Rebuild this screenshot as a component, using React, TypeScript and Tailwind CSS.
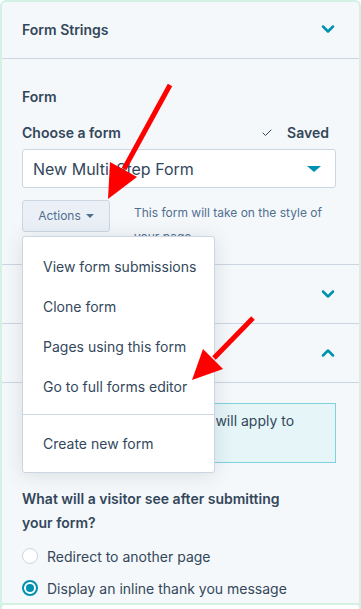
import { Check, ChevronDown, ChevronUp } from "lucide-react";

const menuItems = ["View form submissions", "Clone form", "Pages using this form", "Go to full forms editor"];

function SectionHeader({ title, open }: { title?: string; open?: boolean }) {
  return (
    <div className="flex h-[59px] items-center justify-between border-b border-[#cbd6e2] pl-[20px] pr-[21px]">
      <span className="text-[14px] font-semibold text-[#33475b]">{title}</span>
      {open ? (
        <ChevronUp className="h-[20px] w-[20px] text-[#0091ae]" strokeWidth={3} />
      ) : (
        <ChevronDown className="h-[20px] w-[20px] text-[#0091ae]" strokeWidth={3} />
      )}
    </div>
  );
}

function Radio({ label, checked }: { label: string; checked?: boolean }) {
  return (
    <label className="flex h-[32px] items-center gap-[9px]">
      <span
        className={
          checked
            ? "grid h-[16px] w-[16px] place-items-center rounded-full border-2 border-[#0091ae] bg-white"
            : "h-[16px] w-[16px] rounded-full border border-[#cbd6e2] bg-white"
        }
      >
        {checked && <span className="h-[8px] w-[8px] rounded-full bg-[#0091ae]" />}
      </span>
      <span className="text-[14px] text-[#33475b]">{label}</span>
    </label>
  );
}

export default function App() {
  return (
    <div className="relative h-[609px] w-[361px] overflow-hidden bg-white font-['Inter',sans-serif]">
      <div className="h-full rounded-t-[6px] border-2 border-b-0 border-[#d3f2e4] bg-[#f5f8fa]">
        <div className="-mt-[2px]">
          <SectionHeader title="Form Strings" />
        </div>

        <div className="border-b border-[#cbd6e2] pb-[15px] pl-[20px] pr-[23px] pt-[27px]">
          <p className="text-[14px] font-semibold leading-[22px] text-[#33475b]">Form</p>
          <div className="mt-[14px] flex items-center justify-between pr-[7px]">
            <span className="text-[14px] font-semibold leading-[20px] text-[#33475b]">Choose a form</span>
            <span className="flex items-center gap-[14px] text-[14px] font-semibold text-[#33475b]">
              <Check className="h-[12px] w-[12px]" strokeWidth={2} />
              Saved
            </span>
          </div>
          <div className="mt-[6px] flex h-[39px] items-center justify-between rounded-[3px] border border-[#cbd6e2] bg-white pl-[10px] pr-[14px]">
            <span className="text-[16px] text-[#33475b]">New Multi-Step Form</span>
            <span className="h-0 w-0 border-x-[7px] border-t-[6px] border-x-transparent border-t-[#0091ae]" />
          </div>
          <div className="mt-[12px] flex items-start gap-[24px]">
            <button className="flex h-[32px] w-[88px] shrink-0 items-center justify-center gap-[5px] rounded-[3px] border border-[#cbd6e2] bg-[#eaf0f6] text-[12px] text-[#506e91]">
              Actions
              <span className="h-0 w-0 border-x-[4px] border-t-[4px] border-x-transparent border-t-[#506e91]" />
            </button>
            <p className="pt-[1px] text-[12px] leading-[24px] text-[#516f90]">
              This form will take on the style of your page.
            </p>
          </div>
        </div>

        <SectionHeader />
        <SectionHeader open />

        <div className="pl-[20px] pr-[23px] pt-[20px]">
          <div className="flex h-[60px] flex-col justify-center border border-[#7fd1de] bg-[#e5f5f8] pl-[1px] pr-[14px] text-[14px] leading-[24px] text-[#33475b]">
            <p className="whitespace-nowrap">
              Any changes you make here will apply to
              <br />
              every page using this form.
            </p>
          </div>
          <p className="mt-[24px] w-[280px] text-[14px] font-semibold leading-[24px] text-[#33475b]">
            What will a visitor see after submitting your form?
          </p>
          <div className="mt-[5px]">
            <Radio label="Redirect to another page" />
            <Radio label="Display an inline thank you message" checked />
          </div>
        </div>
      </div>

      <div className="absolute bottom-0 left-0 right-0 top-[603px] rounded-t-[4px] border-2 border-b-0 border-[#d3f2e4] bg-white" />

      <div className="absolute left-[22px] top-[236px] w-[193px] rounded-[3px] border border-[#cbd6e2] bg-white py-[9px] shadow-[0_2px_20px_0_rgba(45,62,80,0.14)]">
        {menuItems.map((item) => (
          <div key={item} className="flex h-[40px] items-center whitespace-nowrap px-[20px] text-[14px] text-[#33475b]">
            {item}
          </div>
        ))}
        <div className="my-[8px] border-t border-[#cbd6e2]" />
        <div className="flex h-[40px] items-center px-[20px] text-[14px] text-[#33475b]">Create new form</div>
      </div>

      <svg className="pointer-events-none absolute left-0 top-0" width="361" height="609">
        <line x1="170" y1="85" x2="124" y2="169" stroke="#ff0000" strokeWidth="5" />
        <polygon points="108,199 137,177 110,162" fill="#ff0000" />
        <line x1="253" y1="318" x2="214" y2="358" stroke="#ff0000" strokeWidth="5" />
        <polygon points="192,380 223,369 203,349" fill="#ff0000" />
      </svg>
    </div>
  );
}
